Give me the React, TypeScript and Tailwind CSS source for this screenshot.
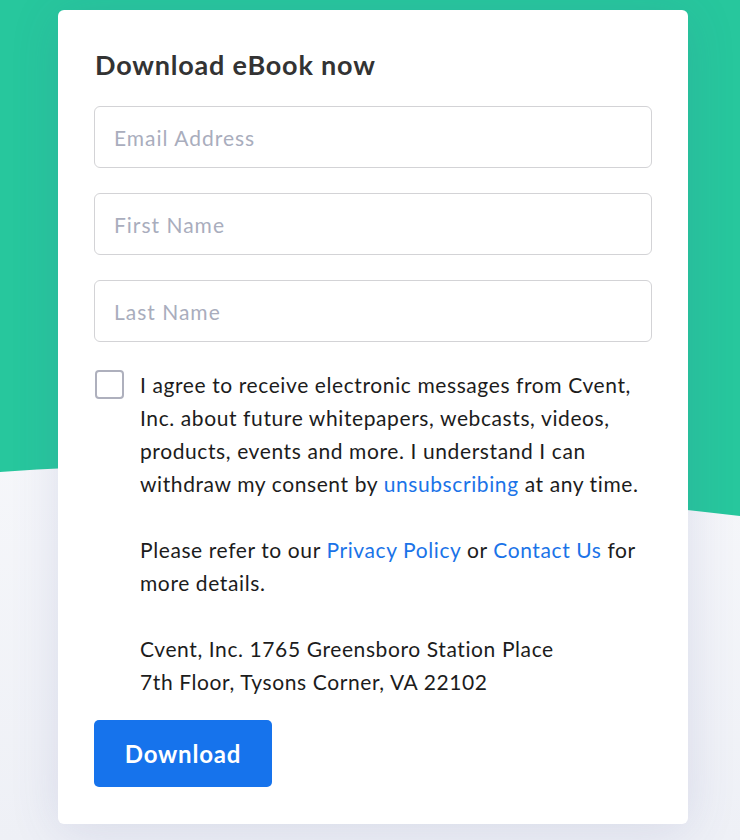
import React from "react";

const font = { fontFamily: "Lato, 'Noto Sans', sans-serif" };

function Field({ placeholder }: { placeholder: string }) {
    return (
        <input
            type="text"
            placeholder={placeholder}
            className="block w-full h-[62px] mb-[25px] rounded-[6px] border border-[#d3d3d6] bg-white px-[19px] text-[21px] tracking-[1px] text-[#222] placeholder:text-[#a9adbd] outline-none"
        />
    );
}

export default function App() {
    return (
        <div className="relative w-[740px] h-[840px] overflow-hidden bg-white" style={font}>
            <svg className="absolute inset-0" width="740" height="840" viewBox="0 0 740 840">
                <defs>
                    <linearGradient id="fade" x1="0" y1="0" x2="0" y2="1">
                        <stop offset="0" stopColor="#ffffff" />
                        <stop offset="1" stopColor="#eef0f6" />
                    </linearGradient>
                </defs>
                <rect x="0" y="0" width="740" height="840" fill="url(#fade)" />
                <path d="M0 0 H740 V516 C520 492 260 452 0 472 Z" fill="#27c79d" />
            </svg>

            <div className="relative pt-[10px] pl-[58px]">
                <div className="w-[630px] h-[814px] rounded-[6px] bg-white px-[36px] pt-[38px] shadow-[0_6px_50px_rgba(70,80,150,0.14)]">
                    <h1 className="text-[27px] leading-[34px] font-bold tracking-[0.8px] text-[#333333] mb-[24px] ml-[1px]">
                        Download eBook now
                    </h1>

                    <Field placeholder="Email Address" />
                    <Field placeholder="First Name" />
                    <Field placeholder="Last Name" />

                    <div className="flex gap-[16px] pt-[1px]">
                        <div className="mt-[2px] ml-[1px] w-[29px] h-[29px] shrink-0 rounded-[4px] border-2 border-[#aeb0bd] bg-white" />
                        <div className="text-[21px] leading-[33px] tracking-[0.6px] text-[#1c1c1c] whitespace-nowrap">
                            <p>
                                I agree to receive electronic messages from Cvent,
                                <br />
                                Inc. about future whitepapers, webcasts, videos,
                                <br />
                                products, events and more. I understand I can
                                <br />
                                withdraw my consent by <a className="text-[#1a73e8]">unsubscribing</a> at any time.
                            </p>
                            <p className="mt-[33px]">
                                Please refer to our <a className="text-[#1a73e8]">Privacy Policy</a> or{" "}
                                <a className="text-[#1a73e8]">Contact Us</a> for
                                <br />
                                more details.
                            </p>
                            <p className="mt-[33px]">
                                Cvent, Inc. 1765 Greensboro Station Place
                                <br />
                                7th Floor, Tysons Corner, VA 22102
                            </p>
                        </div>
                    </div>

                    <button className="mt-[22px] w-[178px] h-[67px] rounded-[5px] bg-[#1673ec] text-white text-[24px] font-bold tracking-[0.8px]">
                        Download
                    </button>
                </div>
            </div>
        </div>
    );
}
